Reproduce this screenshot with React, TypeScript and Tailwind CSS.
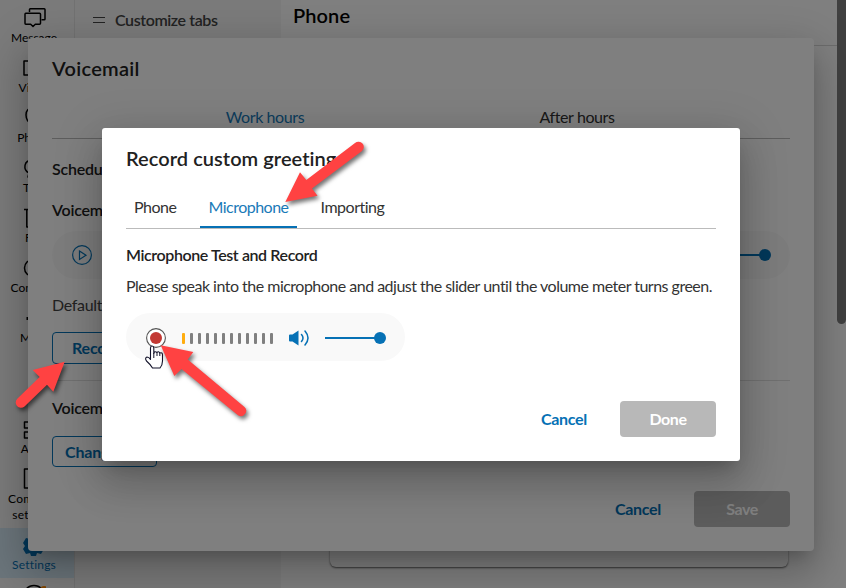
import type { ReactNode } from 'react';
import { clsx } from 'clsx';

function NavIcon({ children }: { children: ReactNode }) {
  return (
    <svg width="24" height="24" viewBox="0 0 24 24" fill="none" stroke="#000" strokeWidth="1.5" strokeLinejoin="round">
      {children}
    </svg>
  );
}

const navItems = [
  {
    label: 'Message',
    icon: (
      <>
        <path d="M7.500 6V3.500Q7.500 2.700 8.300 2.700H22.200Q23 2.700 23 3.500V13Q23 13.800 22.200 13.800H19.500" />
        <path d="M3.800 7.200H17.500Q18.500 7.200 18.500 8.200V17.300Q18.500 18.300 17.500 18.300H13.300L11 20.500L8.700 18.300H3.800Q3 18.300 3 17.300V8.200Q3 7.200 3.800 7.200Z" />
      </>
    ),
  },
  { label: 'Video', icon: <path d="M2 5H16V19H2ZM16 10L22 6V18L16 14" /> },
  { label: 'Phone', icon: <path d="M4 9C4 4 7 2 9 3L10 7L8 10C9 14 11 16 13 16L16 15L19 18C17 22 4 19 4 9Z" /> },
  { label: 'Text', icon: <path d="M7 17C1 14 1 4 11 4C21 4 23 16 14 18H9L6 21L7 17" /> },
  { label: 'Fax', icon: <path d="M2 3.500H20V21H4.800V4" /> },
  { label: 'Contacts', icon: <circle cx="11" cy="12" r="8.500" /> },
  { label: 'More', icon: <path d="M4.500 12.500H6.500M11 12.500H13M19 12.500H21" strokeWidth="3" /> },
];

function Sidebar() {
  return (
    <nav className="flex w-[75px] shrink-0 flex-col border-r border-[#e4e4e4] bg-[#f6f6f6] pr-1.5 text-[12px] leading-4 text-black">
      {navItems.map((item) => (
        <div key={item.label} className="flex h-[50px] shrink-0 flex-col items-center pt-[6px]">
          <NavIcon>{item.icon}</NavIcon>
          <span>{item.label}</span>
        </div>
      ))}
      <div className="mt-[61px] flex h-[50px] shrink-0 flex-col items-center pt-[7px]">
        <NavIcon>
          <path d="M2.500 4H9V10H2.500ZM2.500 14H9V20H2.500ZM14 4H20V10H14ZM14 14H20V20H14Z" />
        </NavIcon>
        <span className="-mt-px">Apps</span>
      </div>
      <div className="flex h-[67px] shrink-0 flex-col items-center pt-[6px] text-center">
        <NavIcon>
          <path d="M2.500 2V21H20V2Z" />
        </NavIcon>
        <span className="tracking-[0.3px]">Company<br />settings</span>
      </div>
      <div className="-mr-1.5 flex h-[50px] shrink-0 flex-col items-center bg-[#d6eaf6] pr-1.5 pt-[6px] text-[#0671b5]">
        <svg width="24" height="24" viewBox="0 0 24 24" fill="currentColor">
          <path d="M9 1H14L15 5L19 4L22 9L20 12L22 15L19 20L15 19L14 22H9L8 19L4 20L1 15L3 12L1 9L4 4L8 5Z" />
        </svg>
        <span className="-mt-px tracking-[0.2px]">Settings</span>
      </div>
      <div className="flex shrink-0 justify-center pt-[6px]">
        <svg width="24" height="24" viewBox="0 0 24 24" fill="none">
          <circle cx="12" cy="12" r="10.500" stroke="#000" strokeWidth="1.500" />
          <circle cx="22" cy="6" r="4" fill="#ff8800" />
        </svg>
      </div>
    </nav>
  );
}

function SettingsPage() {
  return (
    <div className="flex h-full">
      <Sidebar />
      <div className="w-[206px] shrink-0 bg-[#f6f6f6]">
        <div className="flex h-10 items-center pl-[18px] text-[#444]">
          <svg width="12" height="8" viewBox="0 0 12 8" stroke="currentColor">
            <path d="M0 1.500H12M0 6.500H12" />
          </svg>
          <span className="ml-[10px] text-[16px] font-semibold tracking-[-0.4px]">Customize tabs</span>
        </div>
      </div>
      <main className="flex flex-1 flex-col bg-white">
        <h1 className="h-[46px] border-b border-[#d8d8d8] pl-3 text-[20px] leading-[31px] font-semibold tracking-[0.1px] text-black">Phone</h1>
        <div className="mr-[49px] ml-[49px] h-[521px] rounded-md bg-white shadow-[0_1px_2px_rgba(0,0,0,0.6)]" />
      </main>
      <div className="w-[9px] bg-white">
        <div className="h-[324px] rounded-b-full bg-[#808080]" />
      </div>
    </div>
  );
}

function DialogActions({ confirm }: { confirm: string }) {
  return (
    <div className="flex items-center justify-end gap-[33px] text-[16px] font-bold">
      <button className="tracking-[-0.3px] text-[#0671b5]">Cancel</button>
      <button className="h-9 w-24 rounded bg-[#b8b8b8] tracking-[-0.4px] text-white">{confirm}</button>
    </div>
  );
}

const dialogShadow =
  'shadow-[0_11px_15px_-7px_rgba(0,0,0,0.2),0_24px_38px_3px_rgba(0,0,0,0.14),0_9px_46px_8px_rgba(0,0,0,0.12)]';

function VoicemailDialog() {
  return (
    <section className={clsx('absolute top-[38px] left-7 flex h-[513px] w-[786px] flex-col rounded bg-white px-6 pb-6 text-[16px] text-[#212121]', dialogShadow)}>
      <h2 className="pt-[14px] text-[20px] leading-8 font-semibold tracking-[0.3px]">Voicemail</h2>
      <div className="mt-3 flex h-[43px] justify-center border-b border-[#bbb] tracking-[-0.4px]">
        <span className="w-[312px] pt-[9px] text-center text-[#1a7ab8]">Work hours</span>
        <span className="w-[312px] pt-[9px] text-center text-[#333]">After hours</span>
      </div>
      <div className="mt-[18px] font-semibold tracking-[-0.2px]">Schedule</div>
      <div className="mt-[17px] font-semibold tracking-[-0.2px]">Voicemail greeting</div>
      <div className="mt-[9px] flex h-12 shrink-0 items-center justify-between rounded-full bg-[#f9f9f9] pr-[19px] pl-5">
        <svg width="20" height="20" viewBox="0 0 20 20" fill="none" stroke="#0671b5" strokeWidth="1.200">
          <circle cx="10" cy="10" r="9.400" />
          <path d="M7.500 6L14 10.200L7.500 14.400Z" />
        </svg>
        <div className="flex items-center">
          <div className="h-0.5 w-[50px] bg-[#0671b5]" />
          <div className="-ml-px h-3 w-3 rounded-full bg-[#0671b5]" />
        </div>
      </div>
      <div className="mt-[14px] tracking-[-0.3px] text-[#444]">Default</div>
      <button className="mt-[15px] h-8 w-[170px] shrink-0 rounded border border-[#0671b5] pl-[19px] text-left font-bold tracking-[-0.2px] text-[#0671b5]">Record greeting</button>
      <hr className="mt-4 border-[#e0e0e0]" />
      <div className="mt-[15px] font-semibold tracking-[-0.2px]">Voicemail PIN</div>
      <button className="mt-4 h-[31px] w-[105px] shrink-0 rounded border border-[#0671b5] pl-3 text-left font-bold tracking-[-0.2px] text-[#0671b5]">Change</button>
      <div className="mt-auto">
        <DialogActions confirm="Save" />
      </div>
    </section>
  );
}

const tabs = ['Phone', 'Microphone', 'Importing'];
const meter = Array.from({ length: 12 }, (_, i) => i);

function RecordDialog() {
  return (
    <section className={clsx('absolute top-32 left-[102px] flex h-[333px] w-[638px] flex-col rounded-[3px] bg-white px-6 pb-6 text-[16px] text-[#212121]', dialogShadow)}>
      <h2 className="pt-[14px] text-[20px] leading-8 font-semibold tracking-[0.05px]">Record custom greeting</h2>
      <div className="mt-[13px] flex h-[42px] gap-4 border-b border-[#bbb]">
        {tabs.map((tab) => (
          <button
            key={tab}
            className={clsx('border-b-2 px-2 tracking-[-0.5px]', tab === 'Microphone' ? 'border-[#0671b5] text-[#1a7ab8]' : 'border-transparent text-[#333]')}
          >
            {tab}
          </button>
        ))}
      </div>
      <h3 className="mt-[14px] font-semibold tracking-[-0.4px]">Microphone Test and Record</h3>
      <p className="mt-[7px] tracking-[-0.51px] whitespace-nowrap text-[#333]">Please speak into the microphone and adjust the slider until the volume meter turns green.</p>
      <div className="mt-[15px] flex h-12 w-[279px] items-center rounded-full bg-[#f9f9f9] pl-5">
        <svg className="mt-px" width="20" height="20" viewBox="0 0 20 20">
          <circle cx="10" cy="10" r="9.400" fill="#fff" stroke="#555" strokeWidth="1.100" />
          <circle cx="10" cy="10" r="6" fill="#c23934" />
        </svg>
        <div className="mt-0.5 ml-4 flex gap-[5px]">
          {meter.map((i) => (
            <span key={i} className={clsx('h-[11px] w-[3px] rounded-[1px]', i === 0 ? 'bg-[#ffad0f]' : 'bg-[#808080]')} />
          ))}
        </div>
        <svg className="mt-0.5 ml-4" width="21" height="18" viewBox="0 0 21 18" fill="none" stroke="#0671b5" strokeWidth="1.500" strokeLinecap="round">
          <path d="M0 6.500Q0 5.500 1 5.500H3.500L9.500 1.500V16.500L3.500 12.500H1Q0 12.500 0 11.500Z" fill="#0671b5" stroke="none" />
          <path d="M12.500 5.500Q15.500 9 12.500 12.500M16 2Q22 9 16 16" />
        </svg>
        <div className="mt-0.5 ml-[15px] flex items-center">
          <div className="h-0.5 w-[50px] bg-[#0671b5]" />
          <div className="-ml-px h-3 w-3 rounded-full bg-[#0671b5]" />
        </div>
      </div>
      <div className="mt-auto">
        <DialogActions confirm="Done" />
      </div>
    </section>
  );
}

/* Pointer hand and the red callout arrows */
function Annotations() {
  return (
    <svg className="pointer-events-none absolute inset-0" width="846" height="588" viewBox="0 0 846 588">
      <path
        d="M150.500 359.500V348Q150.500 346 152 346Q153.800 346 153.800 348V353.500Q154.500 350.500 157 352.500Q158.500 350.800 159.800 353Q162.500 352 162.500 355V361Q162.500 365 160 368H152.500Q150.500 364.500 146.500 361Q144.500 358 147 357Q149 357 150.500 359.500Z"
        fill="#fff"
        stroke="#12122a"
        strokeWidth="1.100"
        strokeLinejoin="round"
      />
      <path d="M153.800 353V358M157 352.500V356M159.800 353V356" stroke="#12122a" />
      <g fill="#ff4242" className="drop-shadow-[2px_3px_2px_rgba(0,0,0,0.55)]">
        <path d="M285.300 202L300 172.300L306.300 180L355 143A5.300 5.300 0 0 1 362 151L312 188.500L317.500 195.700Z" />
        <path d="M160.700 345.300L193.300 352L187.700 359.500L244.500 407A5.300 5.300 0 0 1 238 415.300L181.500 369L174.300 376Z" />
        <path d="M64.700 361.800L32.700 370L39.700 377L17.500 398.500A5.300 5.300 0 0 0 24.500 406.500L47 384.800L53.300 391.800Z" />
      </g>
    </svg>
  );
}

export default function App() {
  return (
    <div className="relative h-[588px] w-[846px] overflow-hidden bg-white font-[Lato,sans-serif]">
      <SettingsPage />
      <VoicemailDialog />
      <div className="absolute inset-0 bg-black/50" />
      <RecordDialog />
      <Annotations />
    </div>
  );
}
